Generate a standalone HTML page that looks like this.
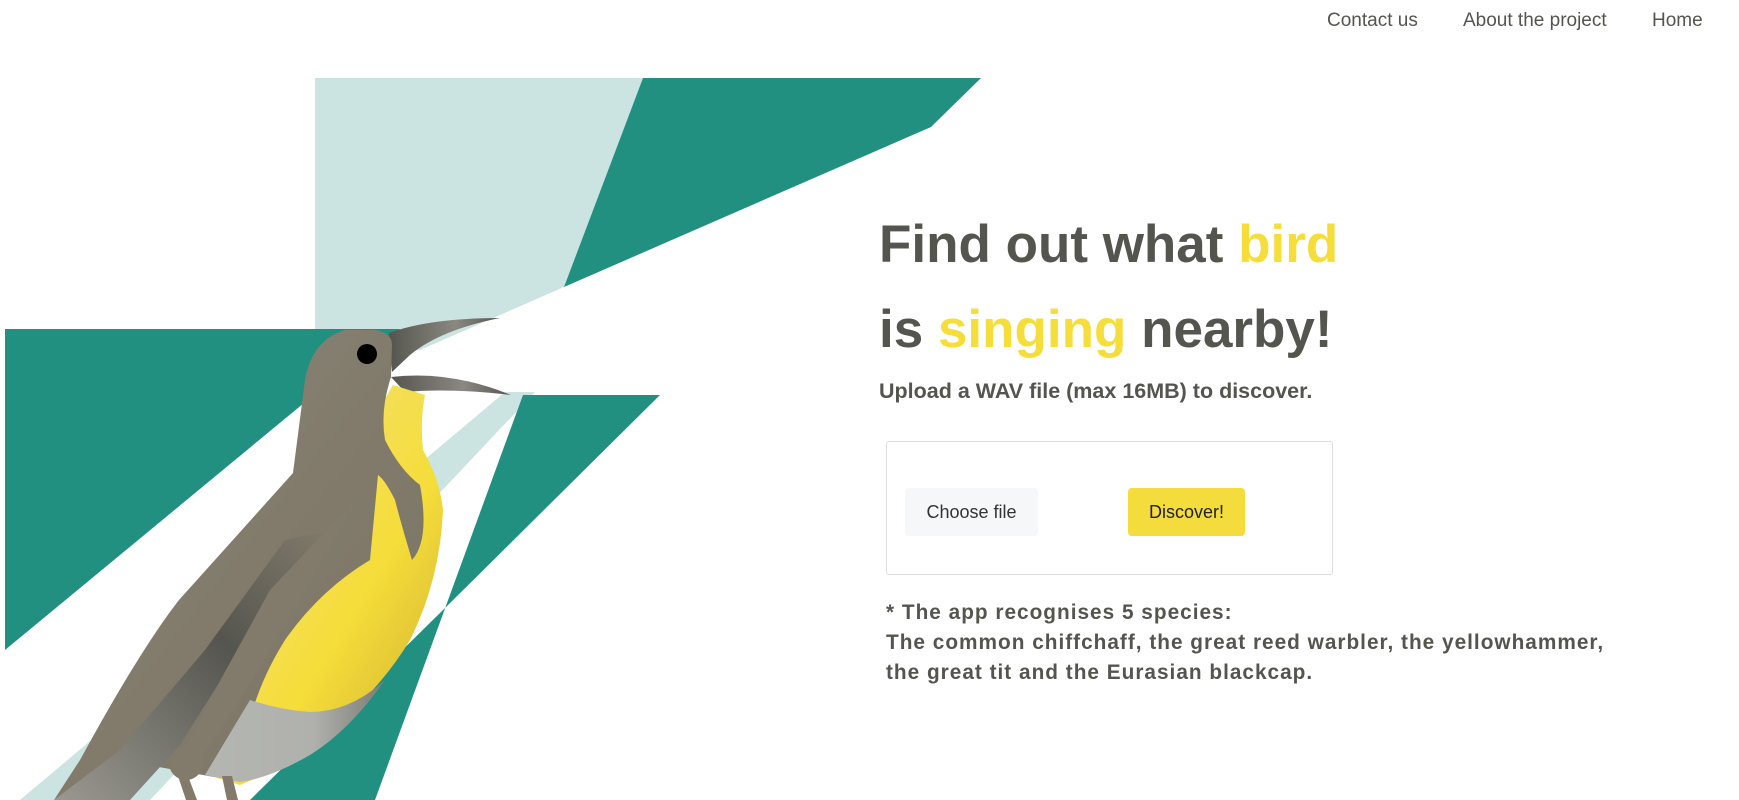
<!DOCTYPE html>
<html><head><meta charset="utf-8"><style>
html,body{margin:0;padding:0;background:#fff;width:1739px;height:800px;overflow:hidden;position:relative;font-family:"Liberation Sans",sans-serif}
svg.bg{position:absolute;left:0;top:0}
.nav{position:absolute;top:10px;font-size:19px;color:#55554f}
.h{position:absolute;left:879px;font-weight:bold;font-size:53px;color:#55554f;white-space:nowrap}
.y{color:#f5dd3a}
.sub{position:absolute;left:879px;top:379px;font-weight:bold;font-size:21.5px;color:#55554f;white-space:nowrap}
.box{position:absolute;left:886px;top:441px;width:445px;height:132px;border:1px solid #ddd;border-radius:3px}
.btn{position:absolute;top:488px;height:48px;line-height:48px;text-align:center;font-size:18px;color:#333;border-radius:4px}
.note{position:absolute;left:886px;top:598px;font-weight:bold;font-size:20.8px;letter-spacing:1px;line-height:30px;color:#55554f;white-space:nowrap}
</style></head><body>
<svg class="bg" width="1739" height="800" viewBox="0 0 1739 800">
<defs>
<linearGradient id="yl" x1="0" y1="0" x2="1" y2="1"><stop offset="0" stop-color="#f3e08a"/><stop offset=".6" stop-color="#f5dd3a"/><stop offset="1" stop-color="#c9a830"/></linearGradient>
<linearGradient id="gb" x1="0" y1="0" x2="1" y2="1"><stop offset="0" stop-color="#8c8a84"/><stop offset=".5" stop-color="#827b6b"/><stop offset="1" stop-color="#7a7566"/></linearGradient>
<linearGradient id="wg" x1="1" y1="0" x2="0" y2="1"><stop offset="0" stop-color="#827b6b"/><stop offset=".4" stop-color="#55554f"/><stop offset="1" stop-color="#9a9890"/></linearGradient>
<linearGradient id="bk" x1="0" y1="0" x2="1" y2="0"><stop offset="0" stop-color="#55554f"/><stop offset=".6" stop-color="#8a8880"/><stop offset="1" stop-color="#55554f"/></linearGradient>
<linearGradient id="gy" x1="0" y1="0" x2="1" y2="0"><stop offset="0" stop-color="#b4b6b2"/><stop offset=".6" stop-color="#b0b1ad"/><stop offset="1" stop-color="#7c7b74"/></linearGradient>
</defs>
<polygon points="315,78 643,78 564,287 420,350 315,360" fill="#cce4e1"/>
<polygon points="643,78 981,78 931,127 564,287" fill="#219080"/>
<polygon points="5,329 400,329 304,403 5,650" fill="#219080"/>
<polygon points="505,392 535,392 150,800 20,800" fill="#cce4e1"/>
<polygon points="523,395 660,395 443,610 250,800 375,800" fill="#219080"/>
<path d="M389,333 Q430,318 500,318 Q440,330 410,355 L392,372 Z" fill="url(#bk)"/>
<path d="M391,377 Q450,370 511,395 Q450,388 405,392 Z" fill="url(#bk)"/>
<path d="M393,385 L425,395 Q420,420 423,450 Q440,480 443,510 Q440,580 410,640 Q380,690 330,730 Q290,765 240,785 L214,777 L200,720 Z" fill="url(#yl)"/>
<path d="M375,330 Q392,333 392,345 L391,377 Q380,410 385,440 Q400,470 420,485 Q430,540 412,560 Q400,520 395,500 Q385,480 378,475 L370,560 Q320,590 285,640 Q260,680 250,720 L214,777 L120,760 L54,800 L80,760 Q140,650 179,600 L293,473 L305,380 Q312,340 345,330 Z" fill="url(#gb)"/>
<path d="M250,700 Q280,710 310,712 Q350,712 385,680 Q350,730 310,755 Q270,778 240,782 L205,775 Z" fill="url(#gy)"/>
<path d="M285,540 L205,650 L120,750 L54,800 L130,800 L180,745 L265,610 L330,530 Z" fill="url(#wg)"/>
<path d="M360,495 L300,600 L240,700 L200,760 L175,770 L215,690 L270,590 Z" fill="#827b6b"/>
<circle cx="186" cy="763" r="17" fill="#827b6b"/>
<polygon points="178,776 188,776 197,800 186,800" fill="#827b6b"/>
<polygon points="222,776 232,776 238,800 227,800" fill="#827b6b"/>
<circle cx="367" cy="354" r="10" fill="#000"/>
</svg>
<div class="nav" style="left:1327px">Contact us</div>
<div class="nav" style="left:1463px">About the project</div>
<div class="nav" style="left:1652px">Home</div>
<div class="h" style="top:214px">Find out what <span class="y">bird</span></div>
<div class="h" style="top:299px">is <span class="y">singing</span> nearby!</div>
<div class="sub">Upload a WAV file (max 16MB) to discover.</div>
<div class="box"></div>
<div class="btn" style="left:905px;width:133px;background:#f6f7f9">Choose file</div>
<div class="btn" style="left:1128px;width:117px;background:#f4dc3c;color:#222">Discover!</div>
<div class="note">* The app recognises 5 species:<br>The common chiffchaff, the great reed warbler, the yellowhammer,<br>the great tit and the Eurasian blackcap.</div>
</body></html>
